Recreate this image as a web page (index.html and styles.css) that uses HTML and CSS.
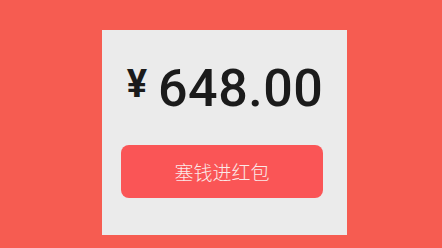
FILE: index.html
```html
<!DOCTYPE html>
<html>
<head>
    <meta charset="utf-8">
    <title>塞钱进红包</title>
    <link rel="stylesheet" href="styles.css">
</head>
<body>
    <div class="card">
        <div class="amount">
            <span class="currency">¥</span>
            <span class="value">648.00</span>
        </div>
        <button class="send-btn">塞钱进红包</button>
    </div>
</body>
</html>
```

FILE: styles.css
```css
html, body {
    height: 100%;
}

body {
    margin: 0;
    background-color: #f65c51;
    font-family: Roboto, "Noto Sans CJK SC", sans-serif;
    overflow: hidden;
}

.card {
    width: 245px;
    height: 205px;
    margin: 30px 0 0 102px;
    padding-top: 33px;
    box-sizing: border-box;
    background-color: #ebebeb;
}

.amount {
    display: flex;
    justify-content: center;
    align-items: flex-start;
    gap: 11px;
    color: #1b1b1b;
    height: 52px;
    padding-left: 1px;
}

.currency {
    margin-top: 2px;
    font-size: 38px;
    line-height: 38px;
    font-weight: bold;
}

.value {
    font-size: 52px;
    line-height: 52px;
    font-weight: 500;
    letter-spacing: 0.5px;
}

.send-btn {
    display: block;
    width: 202px;
    height: 53px;
    margin: 30px 0 0 19px;
    border: none;
    border-radius: 8px;
    background-color: #fa5556;
    color: #fbe9e8;
    font-family: "Noto Sans CJK SC", sans-serif;
    font-size: 19px;
    font-weight: 300;
    cursor: pointer;
}
```
